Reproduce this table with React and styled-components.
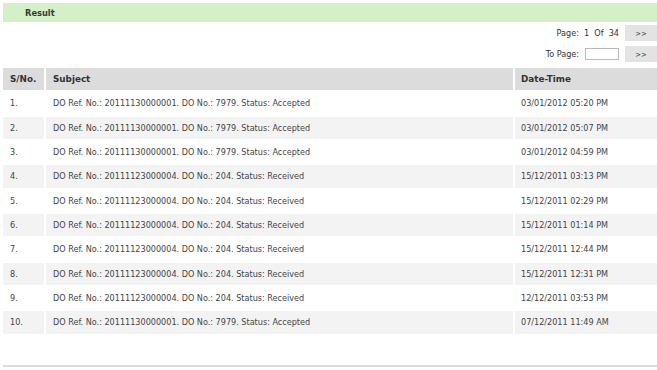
import React from "react";
import styled, { createGlobalStyle } from "styled-components";

const Global = createGlobalStyle`
  html, body { margin: 0; padding: 0; background: #fff; }
  body { font-family: "DejaVu Sans Condensed", "DejaVu Sans", sans-serif; font-stretch: condensed; color: #444; overflow: hidden; }
`;

const Page = styled.div`
  padding: 3px 0 0 3px;
  width: 660px;
`;

const TitleBar = styled.div`
  height: 19px;
  background: #d4f0c7;
  display: flex;
  align-items: center;
  padding-left: 22px;
  font-family: "DejaVu Sans", sans-serif;
  font-stretch: normal;
  font-size: 8.3px;
  font-weight: bold;
  color: #3a3a3a;
`;

const Pager = styled.div`
  display: flex;
  flex-direction: column;
  align-items: flex-end;
  gap: 5px;
  padding: 3px 0 6px 0;
  margin-right: 6px;
`;

const PagerRow = styled.div`
  display: flex;
  align-items: center;
  gap: 6px;
  font-size: 9px;
  color: #333;
`;

const PageInput = styled.input`
  width: 32px;
  height: 10px;
  border: 1px solid #b9b9b9;
  padding: 0;
  margin: 0;
  background: #fff;
`;

const NavButton = styled.button`
  width: 32px;
  height: 16px;
  border: none;
  background: #e3e3e3;
  color: #444;
  font-family: inherit;
  font-size: 7.5px;
  padding: 0;
`;

const Table = styled.div`
  display: grid;
  grid-template-columns: 41px 467px 1fr;
  grid-auto-rows: 22.33px;
  gap: 2px;
`;

const HeadCell = styled.div`
  background: #dcdcdc;
  display: flex;
  align-items: center;
  padding-left: ${(p) => p.$pad}px;
  font-family: "DejaVu Sans", sans-serif;
  font-stretch: normal;
  font-size: 8.8px;
  font-weight: bold;
  color: #333;
`;

const Cell = styled.div`
  background: ${(p) => (p.$alt ? "#f3f3f3" : "#fff")};
  display: flex;
  align-items: center;
  padding-left: ${(p) => p.$pad}px;
  font-size: 9px;
  color: #444;
  white-space: nowrap;
`;

const Footer = styled.div`
  margin-top: 31px;
  border-top: 2px solid #dcdcdc;
`;

const A = "DO Ref. No.: 20111130000001. DO No.: 7979. Status: Accepted";
const R = "DO Ref. No.: 20111123000004. DO No.: 204. Status: Received";

const rows = [
  [A, "03/01/2012 05:20 PM"],
  [A, "03/01/2012 05:07 PM"],
  [A, "03/01/2012 04:59 PM"],
  [R, "15/12/2011 03:13 PM"],
  [R, "15/12/2011 02:29 PM"],
  [R, "15/12/2011 01:14 PM"],
  [R, "15/12/2011 12:44 PM"],
  [R, "15/12/2011 12:31 PM"],
  [R, "12/12/2011 03:53 PM"],
  [A, "07/12/2011 11:49 AM"],
];

export default function App() {
  return (
    <>
      <Global />
      <Page>
        <TitleBar>Result</TitleBar>
        <Pager>
          <PagerRow>
            <span>Page:&nbsp; 1&nbsp; Of&nbsp; 34</span>
            <NavButton>&gt;&gt;</NavButton>
          </PagerRow>
          <PagerRow>
            <span>To Page:</span>
            <PageInput />
            <NavButton>&gt;&gt;</NavButton>
          </PagerRow>
        </Pager>
        <Table>
          <HeadCell $pad={7}>S/No.</HeadCell>
          <HeadCell $pad={7}>Subject</HeadCell>
          <HeadCell $pad={6}>Date-Time</HeadCell>
          {rows.map(([s, d], i) => (
            <React.Fragment key={i}>
              <Cell $alt={i % 2 === 1} $pad={7}>{i + 1}.</Cell>
              <Cell $alt={i % 2 === 1} $pad={7}>{s}</Cell>
              <Cell $alt={i % 2 === 1} $pad={6}>{d}</Cell>
            </React.Fragment>
          ))}
        </Table>
        <Footer />
      </Page>
    </>
  );
}
